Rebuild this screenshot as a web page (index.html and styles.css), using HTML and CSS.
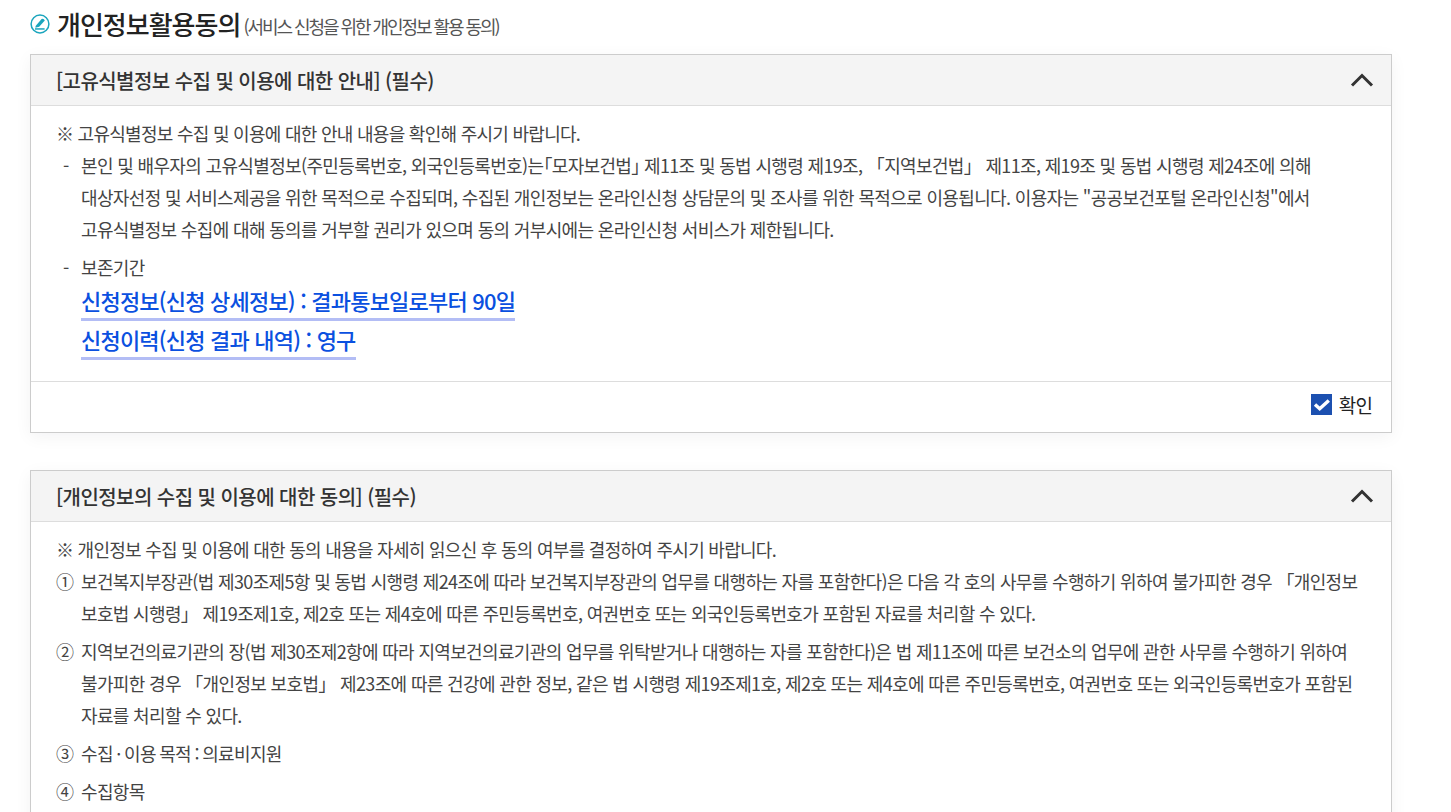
FILE: index.html
```html
<!DOCTYPE HTML>
<html lang="ko">

<head>
    <meta charset="utf-8">
    <title>개인정보활용동의</title>
    <link rel="stylesheet" href="styles.css">
</head>

<body>

<h2 class="page-title">
    <svg class="title-icon" width="20" height="20" viewBox="0 0 20 20">
        <circle cx="10" cy="10" r="8.9" fill="none" stroke="#1ba5bd" stroke-width="1.5"/>
        <path d="M5.6 12 L11.6 5 Q14 4.4 14.8 6.4 L9.2 12.8 L5.4 13.8 Z" fill="#1ba5bd"/>
        <rect x="5" y="14.2" width="9.6" height="1.5" fill="#1ba5bd"/>
    </svg>
    <span>개인정보활용동의</span>
    <small>(서비스 신청을 위한 개인정보 활용 동의)</small>
</h2>

<section class="panel">
    <div class="panel-head">
        <h3>[고유식별정보 수집 및 이용에 대한 안내] (필수)</h3>
        <svg width="24" height="16" viewBox="0 0 24 16"><path d="M2 13.5 L12 3.5 L22 13.5" fill="none" stroke="#333" stroke-width="3"/></svg>
    </div>
    <div class="panel-body">
        <p class="lead">※ 고유식별정보 수집 및 이용에 대한 안내 내용을 확인해 주시기 바랍니다.</p>
        <div class="item">
            <span class="mark dash">-</span>
            <p>본인 및 배우자의 고유식별정보(주민등록번호, 외국인등록번호)는<span class="half">「모자보건법」</span> 제11조 및 동법 시행령 제19조, 「지역보건법」 제11조, 제19조 및 동법 시행령 제24조에 의해<br>
            대상자선정 및 서비스제공을 위한 목적으로 수집되며, 수집된 개인정보는 온라인신청 상담문의 및 조사를 위한 목적으로 이용됩니다. 이용자는 "공공보건포털 온라인신청"에서<br>
            고유식별정보 수집에 대해 동의를 거부할 권리가 있으며 동의 거부시에는 온라인신청 서비스가 제한됩니다.</p>
        </div>
        <div class="item">
            <span class="mark dash">-</span>
            <div>
                <p>보존기간</p>
                <p class="keep"><strong>신청정보(신청 상세정보) : 결과통보일로부터 90일</strong></p>
                <p class="keep"><strong>신청이력(신청 결과 내역) : 영구</strong></p>
            </div>
        </div>
    </div>
    <div class="panel-foot">
        <label class="check">
            <svg width="21" height="21" viewBox="0 0 21 21">
                <rect width="21" height="21" fill="#1c50b0"/>
                <path d="M4 10.5 L8.7 14.8 L17.8 6.5" fill="none" stroke="#fff" stroke-width="3.4"/>
            </svg>
            확인
        </label>
    </div>
</section>

<section class="panel">
    <div class="panel-head">
        <h3>[개인정보의 수집 및 이용에 대한 동의] (필수)</h3>
        <svg width="24" height="16" viewBox="0 0 24 16"><path d="M2 13.5 L12 3.5 L22 13.5" fill="none" stroke="#333" stroke-width="3"/></svg>
    </div>
    <div class="panel-body">
        <p class="lead">※ 개인정보 수집 및 이용에 대한 동의 내용을 자세히 읽으신 후 동의 여부를 결정하여 주시기 바랍니다.</p>
        <div class="item">
            <span class="mark">①</span>
            <p>보건복지부장관(법 제30조제5항 및 동법 시행령 제24조에 따라 보건복지부장관의 업무를 대행하는 자를 포함한다)은 다음 각 호의 사무를 수행하기 위하여 불가피한 경우 「개인정보<br>
            보호법 시행령」 제19조제1호, 제2호 또는 제4호에 따른 주민등록번호, 여권번호 또는 외국인등록번호가 포함된 자료를 처리할 수 있다.</p>
        </div>
        <div class="item">
            <span class="mark">②</span>
            <p>지역보건의료기관의 장(법 제30조제2항에 따라 지역보건의료기관의 업무를 위탁받거나 대행하는 자를 포함한다)은 법 제11조에 따른 보건소의 업무에 관한 사무를 수행하기 위하여<br>
            불가피한 경우 「개인정보 보호법」 제23조에 따른 건강에 관한 정보, 같은 법 시행령 제19조제1호, 제2호 또는 제4호에 따른 주민등록번호, 여권번호 또는 외국인등록번호가 포함된<br>
            자료를 처리할 수 있다.</p>
        </div>
        <div class="item">
            <span class="mark">③</span>
            <p class="narrow">수집 · 이용 목적 : 의료비지원</p>
        </div>
        <div class="item">
            <span class="mark">④</span>
            <p>수집항목</p>
        </div>
    </div>
</section>

</body>

</html>
```

FILE: styles.css
```css
html, body {
    height: 812px;
    overflow: hidden;
}

body {
    margin: 0;
    padding: 0 59px 0 30px;
    background: #fff;
    color: #444;
    font-family: "Noto Sans CJK KR", "Noto Sans", sans-serif;
    font-size: 18px;
    letter-spacing: -0.65px;
}

p {
    margin: 0;
}

.page-title {
    display: flex;
    align-items: center;
    height: 54px;
    margin: 0;
    padding-bottom: 8px;
    box-sizing: border-box;
    color: #222;
    font-size: 26px;
    font-weight: 500;
    letter-spacing: -1px;
}

.title-icon {
    margin: 2px 7px 0 0;
}

.page-title small {
    margin-left: 3px;
    padding-top: 6px;
    color: #555;
    font-size: 18px;
    font-weight: 400;
    letter-spacing: -2.05px;
}

.panel {
    margin-bottom: 37px;
    border: 1px solid #ccc;
    box-shadow: 0 4px 16px rgba(0, 0, 40, 0.05);
}

.panel-head {
    display: flex;
    align-items: center;
    justify-content: space-between;
    height: 50px;
    padding: 0 17px 0 26px;
    border-bottom: 1px solid #ddd;
    background: #f4f4f4;
}

.panel-head h3 {
    margin: 0 0 0 -1px;
    color: #333;
    font-size: 20px;
    font-weight: 500;
    letter-spacing: -0.55px;
}

.panel-body {
    padding: 11px 25px 14px;
    line-height: 32px;
}

.lead {
    letter-spacing: -0.72px;
}

.item {
    display: flex;
    margin-bottom: 6px;
}

.mark {
    flex: none;
    width: 25px;
}

.dash {
    padding-left: 7px;
    width: 18px;
}

/* half width brackets */
.half {
    font-feature-settings: "halt";
}

.narrow {
    word-spacing: -1px;
}

.keep {
    height: 39px;
    line-height: 35px;
    font-size: 22px;
    letter-spacing: -0.8px;
}

.keep strong {
    display: inline-block;
    height: 35px;
    border-bottom: 3px solid #b3bdf5;
    color: #0a50e0;
    font-weight: 500;
}

.panel-foot {
    display: flex;
    justify-content: flex-end;
    height: 45px;
    padding: 0 19px 5px 0;
    border-top: 1px solid #ddd;
}

.check {
    display: flex;
    align-items: center;
    gap: 7px;
    color: #222;
    font-size: 19px;
    letter-spacing: -0.9px;
}
```
